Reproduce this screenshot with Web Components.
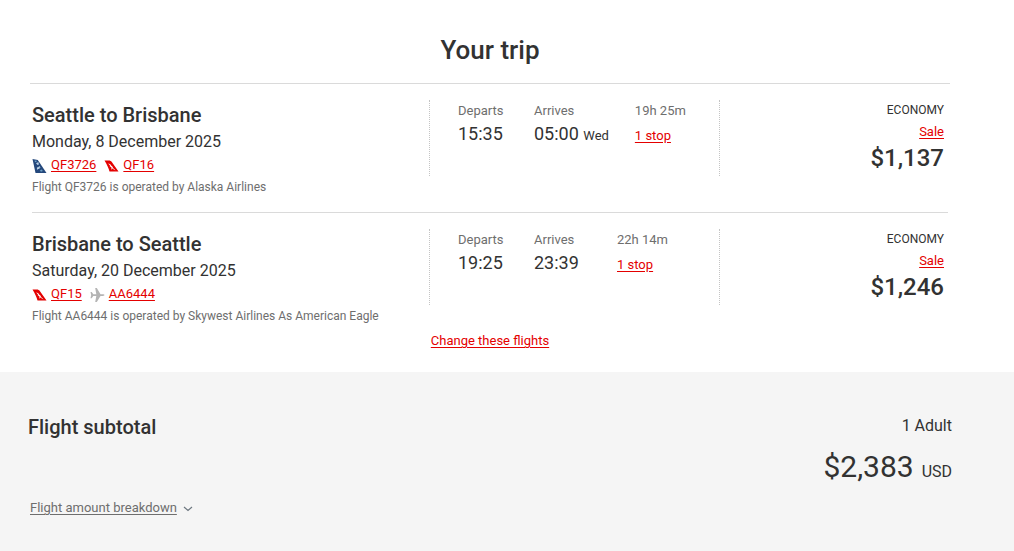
<!DOCTYPE html>
<html lang="en">
<head>
<meta charset="utf-8">
<meta name="viewport" content="width=device-width, initial-scale=1">
<title>Your trip</title>
<style>
  :root {
    --text: #323232;
    --text-muted: #6e6e6e;
    --link: #e40000;
    --line: #dadada;
    --panel: #f5f5f5;
  }
  body {
    margin: 0;
    min-height: 100vh;
    display: flex;
    flex-direction: column;
    background: #fff;
    color: var(--text);
    font: 13px/22px Roboto, "Liberation Sans", sans-serif;
  }
  flight-subtotal {
    flex: 1;
  }
</style>
</head>
<body>
<trip-summary heading="Your trip">
  <flight-leg heading="Seattle to Brisbane" date="Monday, 8 December 2025" departs="15:35" arrives="05:00" day="Wed" duration="19h 25m" stops="1 stop" cabin="ECONOMY" fare="Sale" price="$1,137">
    <flight-number slot="flights" airline="alaska">QF3726</flight-number>
    <flight-number slot="flights" airline="qantas">QF16</flight-number>
    Flight QF3726 is operated by Alaska Airlines
  </flight-leg>
  <flight-leg heading="Brisbane to Seattle" date="Saturday, 20 December 2025" departs="19:25" arrives="23:39" duration="22h 14m" stops="1 stop" cabin="ECONOMY" fare="Sale" price="$1,246">
    <flight-number slot="flights" airline="qantas">QF15</flight-number>
    <flight-number slot="flights" airline="other">AA6444</flight-number>
    Flight AA6444 is operated by Skywest Airlines As American Eagle
  </flight-leg>
  <text-link slot="action">Change these flights</text-link>
</trip-summary>
<flight-subtotal heading="Flight subtotal" passengers="1 Adult" amount="$2,383" currency="USD">Flight amount breakdown</flight-subtotal>

<script>
class TextLink extends HTMLElement {
  constructor() {
    super()
    this.attachShadow({ mode: 'open' })
  }

  connectedCallback() {
    this.shadowRoot.innerHTML = `
      <style>
        :host {
          display: inline;
          font-size: 13px;
        }
        a {
          color: var(--link);
          text-decoration: underline;
          text-underline-offset: 2px;
        }
        a:hover {
          text-decoration: none;
        }
      </style>
      <a href="#"><slot></slot></a>
    `
  }
}

const TAILS = {
  alaska: `
    <path fill="#24487c" d="M0 0l5.300 1L14 14H3z"/>
    <path fill="#b5cde2" d="M3.500 4.200l2-1 1.200.8-.9.900.9.700-1.700.4zM4.400 8.600l1.500-.6 1.100-.9 1.100 1.500-1.500.4.7 1-1.800.1-1 .8z"/>
    <path fill="#6d9fc4" d="M2 1.800l1.800-.2.5.9-1.600.7zM7.500 11.300l1.600-.7 1.300 1.500-2 .6z"/>`,
  qantas: `
    <path fill="#e40000" d="M0 1.500h4.500c1.100 0 2 .5 2.800 1.500L14 12.500H5C4.200 9.500 2.600 5.500 0 1.500z"/>
    <path fill="#fff" d="M3.600 4.500c1.400.2 2.400.8 2.900 1.700.4.700 1.100.8 1.500 1.500.4.700.5 1.300 1 1.900.5.600 1.200 1.100 2 1.700-1.300-.4-2.300-.9-2.800-1.800-.7.200-1.100.6-1.200 1.400-.3-.9-.2-1.500.2-2.100-.7-.3-1-.7-1.200-1.300-.3.100-.5.400-.7.800 0-.6.100-1 .4-1.400-.4-.9-1.100-1.600-2.100-2.400z"/>`,
  other: `
    <path fill="#b4b4b4" d="M0 4h1.200l1.600 2.200h3L4.700 0h1.600l3.700 6.200h2.200c1.100 0 1.800.4 1.800.9s-.7.900-1.800.9H10l-3.700 6H4.700l1.100-6h-3l-1.600 2.300H0l.7-3.200z"/>`,
}

class FlightNumber extends HTMLElement {
  constructor() {
    super()
    this.attachShadow({ mode: 'open' })
  }

  connectedCallback() {
    this.shadowRoot.innerHTML = `
      <style>
        :host {
          display: flex;
          align-items: center;
          gap: 4px;
        }
        svg {
          width: 15px;
          height: 14px;
          margin-top: 2px;
        }
      </style>
      <svg viewBox="0 0 14 14" aria-hidden="true">${TAILS[this.getAttribute('airline')]}</svg>
      <text-link><slot></slot></text-link>
    `
  }
}

class FlightLeg extends HTMLElement {
  constructor() {
    super()
    this.attachShadow({ mode: 'open' })
  }

  connectedCallback() {
    const get = name => this.getAttribute(name) || ''
    const day = get('day') ? ` <small>${get('day')}</small>` : ''

    this.shadowRoot.innerHTML = `
      <style>
        :host {
          display: grid;
          grid-template-columns: 397fr 291fr 228fr;
          align-items: start;
          margin: 0 2px;
          padding: 16px 0 14px;
        }
        :host(:not(:first-of-type)) {
          border-top: 1px solid var(--line);
          padding-bottom: 0;
        }
        h2, p, dl, dd {
          margin: 0;
        }
        h2 {
          font-size: 20px;
          line-height: 30px;
          font-weight: 500;
        }
        .date {
          font-size: 16px;
          line-height: 24px;
        }
        .flights {
          display: flex;
          gap: 8px;
        }
        .operator, dt {
          color: var(--text-muted);
        }
        .operator, .cabin {
          font-size: 12px;
        }
        .times {
          display: flex;
          gap: 26px;
          box-sizing: border-box;
          min-height: 76px;
          padding-left: 28px;
          border: dotted #c4c4c4;
          border-width: 0 1px;
        }
        .departs {
          min-width: 50px;
        }
        .arrives {
          min-width: 57px;
        }
        dd {
          font-size: 18px;
          line-height: 24px;
        }
        small {
          font-size: 13px;
        }
        .fare {
          padding-right: 4px;
          line-height: 21px;
          text-align: right;
        }
        .price {
          font-size: 24px;
          line-height: 32px;
          font-weight: 500;
        }
      </style>
      <div>
        <h2>${get('heading')}</h2>
        <p class="date">${get('date')}</p>
        <div class="flights"><slot name="flights"></slot></div>
        <p class="operator"><slot></slot></p>
      </div>
      <dl class="times">
        <div class="departs"><dt>Departs</dt><dd>${get('departs')}</dd></div>
        <div class="arrives"><dt>Arrives</dt><dd>${get('arrives')}${day}</dd></div>
        <div><dt>${get('duration')}</dt><dd><text-link>${get('stops')}</text-link></dd></div>
      </dl>
      <div class="fare">
        <p class="cabin">${get('cabin')}</p>
        <p><text-link>${get('fare')}</text-link></p>
        <p class="price">${get('price')}</p>
      </div>
    `
  }
}

class TripSummary extends HTMLElement {
  constructor() {
    super()
    this.attachShadow({ mode: 'open' })
  }

  connectedCallback() {
    this.shadowRoot.innerHTML = `
      <style>
        :host {
          display: block;
          padding: 32px 64px 20px 30px;
        }
        h1 {
          margin: 0;
          padding-bottom: 15px;
          border-bottom: 1px solid var(--line);
          font-size: 26px;
          line-height: 36px;
          font-weight: 500;
          text-align: center;
        }
        .action {
          padding-top: 3px;
          text-align: center;
        }
      </style>
      <h1>${this.getAttribute('heading')}</h1>
      <slot></slot>
      <div class="action"><slot name="action"></slot></div>
    `
  }
}

class FlightSubtotal extends HTMLElement {
  constructor() {
    super()
    this.attachShadow({ mode: 'open' })
  }

  connectedCallback() {
    const get = name => this.getAttribute(name) || ''

    this.shadowRoot.innerHTML = `
      <style>
        :host {
          display: block;
          padding: 40px 62px 32px 28px;
          background: var(--panel);
        }
        .row {
          display: flex;
          justify-content: space-between;
          align-items: flex-start;
          padding-bottom: 3px;
        }
        h2, p {
          margin: 0;
        }
        h2 {
          font-size: 20px;
          line-height: 30px;
          font-weight: 500;
        }
        .total {
          font-size: 16px;
          line-height: 28px;
          text-align: right;
        }
        .amount {
          margin-right: 4px;
          font-size: 30px;
          line-height: 54px;
        }
        button {
          display: flex;
          align-items: center;
          gap: 6px;
          margin: 0 2px;
          padding: 0;
          border: 0;
          background: none;
          color: var(--text-muted);
          font: inherit;
          cursor: pointer;
        }
        button span {
          text-decoration: underline;
          text-underline-offset: 2px;
        }
        svg {
          width: 10px;
          height: 10px;
          margin-top: 2px;
        }
      </style>
      <div class="row">
        <h2>${get('heading')}</h2>
        <div class="total">
          <p>${get('passengers')}</p>
          <p><span class="amount">${get('amount')}</span> ${get('currency')}</p>
        </div>
      </div>
      <button type="button" aria-expanded="false">
        <span><slot></slot></span>
        <svg viewBox="0 0 10 10" aria-hidden="true"><path d="M1 3l4 3.500L9 3" fill="none" stroke="#6e7880" stroke-width="1.200"/></svg>
      </button>
    `
  }
}

customElements.define('text-link', TextLink)
customElements.define('flight-number', FlightNumber)
customElements.define('flight-leg', FlightLeg)
customElements.define('trip-summary', TripSummary)
customElements.define('flight-subtotal', FlightSubtotal)
</script>
</body>
</html>
